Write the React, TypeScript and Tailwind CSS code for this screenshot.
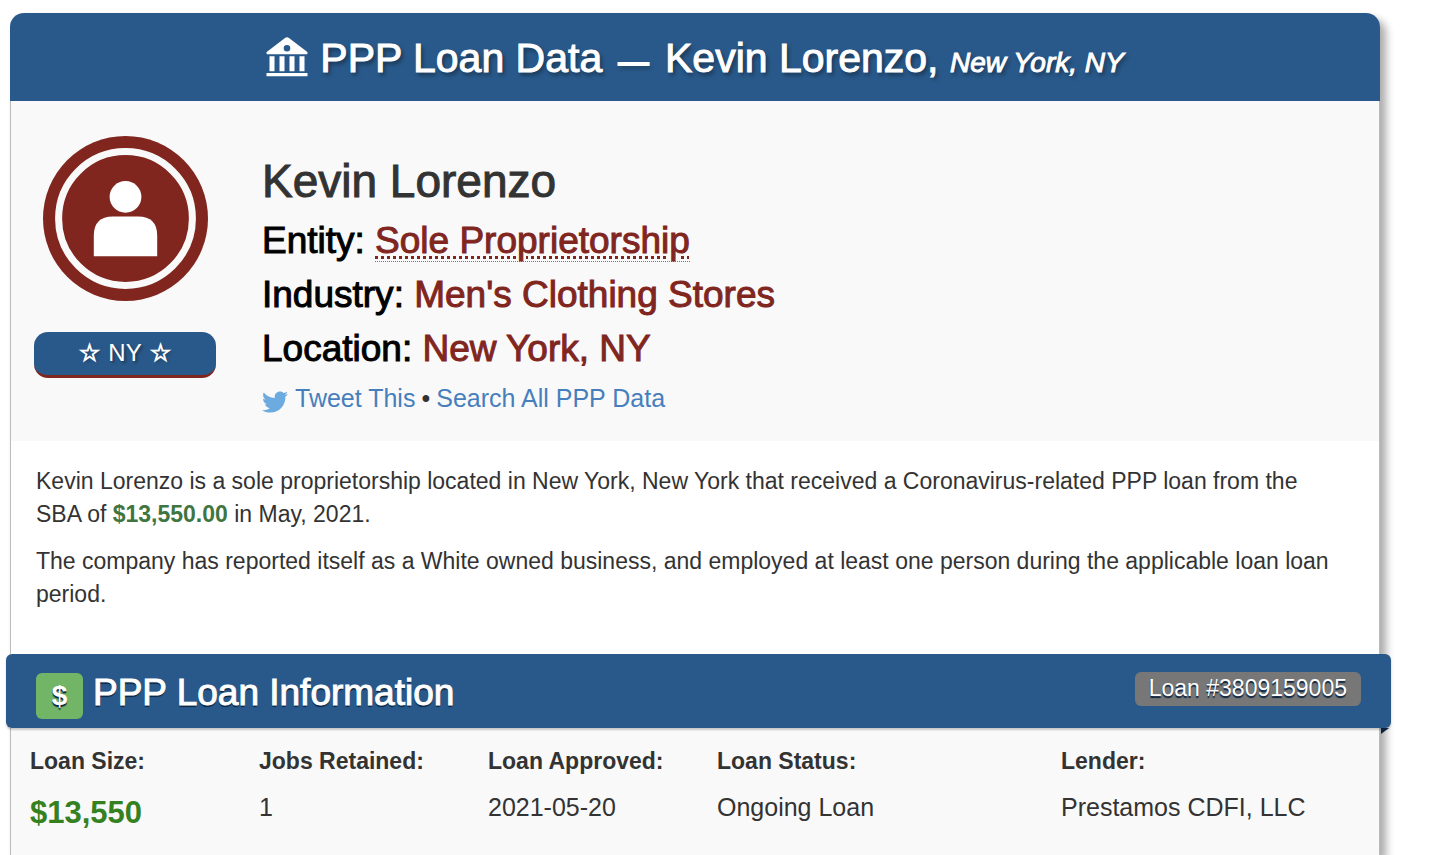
import { FaTwitter } from "react-icons/fa";

const details = [
  { label: "Industry", value: "Men's Clothing Stores" },
  { label: "Location", value: "New York, NY" },
];

const loanFacts = [
  { label: "Jobs Retained", value: "1" },
  { label: "Loan Approved", value: "2021-05-20" },
  { label: "Loan Status", value: "Ongoing Loan" },
  { label: "Lender", value: "Prestamos CDFI, LLC" },
];

function BankIcon() {
  return (
    <svg className="h-10 w-[42px] shrink-0" viewBox="0 0 42 40" fill="#fff" aria-hidden>
      <path
        fillRule="evenodd"
        d="M19 1q2-1.400 4 0L41 14.800q1.200 1.200 0 2.400H1q-1.200-1.200 0-2.400ZM21 8a3.300 3.300 0 1 0 0 6.600a3.300 3.300 0 1 0 0-6.600Z"
      />
      <path d="M3.500 19.200h5v15h-5zM13.500 19.200h5v15h-5zM23.500 19.200h5v15h-5zM33.500 19.200h5v15h-5zM.5 36h41v3.300H.5z" />
    </svg>
  );
}

function Avatar() {
  return (
    <svg className="size-[165px]" viewBox="0 0 164 164" aria-hidden>
      <circle cx="82" cy="82" r="82" fill="#80261f" />
      <circle cx="82" cy="82" r="66.500" fill="none" stroke="#f9f9f9" strokeWidth="7" />
      <circle cx="82" cy="60.500" r="15.800" fill="#fff" />
      <path d="M50.500 119.500V99q0-19 19-19h25q19 0 19 19v20.500Z" fill="#fff" />
    </svg>
  );
}

function ProfileHeader() {
  return (
    <section className="flex gap-[46px] border-x border-[#bbb] bg-[#f9f9f9] pt-[35px] pb-[25px] pl-[23px]">
      <div className="flex w-[182px] shrink-0 flex-col items-center gap-[31px]">
        <Avatar />
        <div className="flex h-[46px] w-full items-center justify-center gap-2 rounded-[14px] border-b-[3px] border-[#80261f] bg-[#29598a] pb-px text-2xl text-white [text-shadow:2px_2px_3px_#0006]">
          <span className="font-['DejaVu_Sans'] [-webkit-text-stroke:1px]">☆</span>
          <span>NY</span>
          <span className="font-['DejaVu_Sans'] [-webkit-text-stroke:1px]">☆</span>
        </div>
      </div>

      <div className="pt-5">
        <h2 className="mb-2 text-[46px] leading-[50px] text-[#333] [-webkit-text-stroke:1px]">Kevin Lorenzo</h2>
        <div className="text-[37px] leading-[54px] text-[#80261f] [-webkit-text-stroke:1px]">
          <p>
            <span className="text-black">Entity:</span>{" "}
            <abbr
              className="border-b border-dotted border-[#777] underline decoration-dotted decoration-[3px] underline-offset-3"
              title="Business type"
            >
              Sole Proprietorship
            </abbr>
          </p>
          {details.map((item) => (
            <p key={item.label}>
              <span className="text-black">{item.label}:</span> {item.value}
            </p>
          ))}
        </div>
        <p className="mt-1 flex items-center gap-[7px] text-[25px] leading-9 text-[#333]">
          <FaTwitter className="mt-2 size-[26px] text-[#6cabe0]" aria-hidden />
          <span>
            <a className="text-[#477fbd]" href="#tweet">
              Tweet This
            </a>
            <span className="mx-[6px]">•</span>
            <a className="text-[#477fbd]" href="#search">
              Search All PPP Data
            </a>
          </span>
        </p>
      </div>
    </section>
  );
}

function LoanRibbon() {
  return (
    <div className="relative -mr-[11px] -ml-1 flex h-[74px] items-start justify-between rounded-md bg-[#29598a] pt-[18px] pr-[30px] pl-[30px] text-white shadow-[0_2px_2px_#0003] [text-shadow:0_2px_1px_#0a2440]">
      <div className="flex gap-[10px] pt-px">
        <span className="flex h-[46px] w-[47px] items-center justify-center rounded-md bg-[#73b566] text-[28px] font-bold">$</span>
        <h2 className="text-[37px] leading-10 [-webkit-text-stroke:1px]">PPP Loan Information</h2>
      </div>
      <span className="flex h-[34px] items-center rounded-md bg-[#777] px-[14px] pb-[2px] text-[23px]">Loan #3809159005</span>
      {/* folded corner under the ribbon */}
      <svg className="absolute top-full right-[2px] h-[6px] w-2" viewBox="0 0 8 6" aria-hidden>
        <path d="M0 0h8L0 6z" fill="#0b2242" />
      </svg>
    </div>
  );
}

export default function App() {
  return (
    <main className="flex min-h-screen flex-col bg-white pt-[13px] pr-[60px] pl-[10px] font-['Liberation_Sans',Arial,sans-serif] text-[#333]">
      <article className="flex flex-1 flex-col rounded-t-[14px] shadow-[6px_6px_8px_#0005]">
        <header className="flex h-[88px] items-center justify-center gap-3 rounded-t-[14px] bg-[#29598a] text-white">
          <BankIcon />
          <h1 className="pt-1 text-[41px] [-webkit-text-stroke:1px] [text-shadow:2px_3px_4px_#0007]">
            PPP Loan Data <span className="mx-[5px] text-[30px] [-webkit-text-stroke:2px]">—</span> Kevin Lorenzo,{" "}
            <em className="text-[28px]">New York, NY</em>
          </h1>
        </header>

        <ProfileHeader />

        <section className="border-x border-[#bbb] bg-white pt-6 pr-9 pb-[43px] pl-[25px] text-[23px] leading-[33px]">
          <p>
            Kevin Lorenzo is a sole proprietorship located in New York, New York that received a Coronavirus-related PPP loan from the SBA
            of <strong className="text-[#3f7540]">$13,550.00</strong> in May, 2021.
          </p>
          <p className="mt-[14px]">
            The company has reported itself as a White owned business, and employed at least one person during the applicable loan loan
            period.
          </p>
        </section>

        <LoanRibbon />

        <section className="flex-1 border-x border-[#bbb] bg-[#f9f9f9] pt-[17px] pb-6 pl-[19px]">
          <dl className="grid grid-cols-[229fr_229fr_229fr_344fr_318fr] text-[25px] leading-8">
            <div>
              <dt className="text-[23px] font-bold">Loan Size:</dt>
              <dd className="mt-5 text-[31px] font-bold text-[#36811f]">$13,550</dd>
            </div>
            {loanFacts.map((fact) => (
              <div key={fact.label}>
                <dt className="text-[23px] font-bold">{fact.label}:</dt>
                <dd className="mt-[14px]">{fact.value}</dd>
              </div>
            ))}
          </dl>
        </section>
      </article>
    </main>
  );
}
